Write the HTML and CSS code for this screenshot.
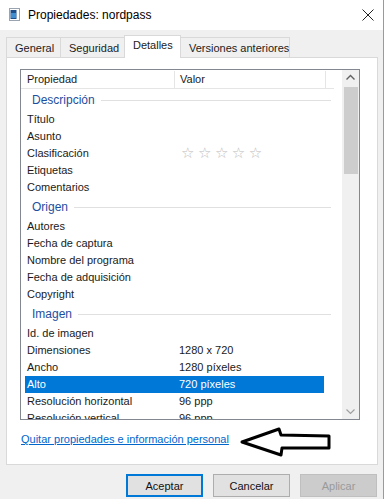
FILE: index.html
```html
<!DOCTYPE html>
<html lang="es">
<head>
<meta charset="utf-8">
<link rel="stylesheet" href="styles.css">
</head>
<body>
<div class="window">
  <div class="titlebar">
    <svg class="appicon" width="11" height="13" viewBox="0 0 11 13">
      <rect x="0.5" y="0.5" width="10" height="12" fill="#fff" stroke="#9aa4b0"/>
      <rect x="1.5" y="2" width="6" height="9" fill="#1d4e8a"/>
      <rect x="2" y="5" width="5" height="5" fill="#3f8fd0"/>
    </svg>
    <span class="title">Propiedades: nordpass</span>
    <svg class="close" width="12" height="12" viewBox="0 0 12 12">
      <path d="M0.5 0.5 L11.5 11.5 M11.5 0.5 L0.5 11.5" stroke="#222" stroke-width="1"/>
    </svg>
  </div>
  <div class="main">
    <div class="tabs">
      <div class="tab t-general">General</div>
      <div class="tab t-seg">Seguridad</div>
      <div class="tab active">Detalles</div>
      <div class="tab t-ver">Versiones anteriores</div>
    </div>
    <div class="panel">
      <div class="list">
        <div class="rows">
          <div class="header">
            <span class="hcol1">Propiedad</span>
            <span class="hcol2">Valor</span>
          </div>
          <div class="group"><span>Descripción</span><i></i></div>
          <div class="row"><span class="c1">Título</span><span class="c2"></span></div>
          <div class="row"><span class="c1">Asunto</span><span class="c2"></span></div>
          <div class="row"><span class="c1">Clasificación</span><span class="c2 stars">☆☆☆☆☆</span></div>
          <div class="row"><span class="c1">Etiquetas</span><span class="c2"></span></div>
          <div class="row"><span class="c1">Comentarios</span><span class="c2"></span></div>
          <div class="group"><span>Origen</span><i></i></div>
          <div class="row"><span class="c1">Autores</span><span class="c2"></span></div>
          <div class="row"><span class="c1">Fecha de captura</span><span class="c2"></span></div>
          <div class="row"><span class="c1">Nombre del programa</span><span class="c2"></span></div>
          <div class="row"><span class="c1">Fecha de adquisición</span><span class="c2"></span></div>
          <div class="row"><span class="c1">Copyright</span><span class="c2"></span></div>
          <div class="group"><span>Imagen</span><i></i></div>
          <div class="row"><span class="c1">Id. de imagen</span><span class="c2"></span></div>
          <div class="row"><span class="c1">Dimensiones</span><span class="c2">1280 x 720</span></div>
          <div class="row"><span class="c1">Ancho</span><span class="c2">1280 píxeles</span></div>
          <div class="row selected"><span class="c1">Alto</span><span class="c2">720 píxeles</span></div>
          <div class="row"><span class="c1">Resolución horizontal</span><span class="c2">96 ppp</span></div>
          <div class="row last"><span class="c1">Resolución vertical</span><span class="c2">96 ppp</span></div>
        </div>
        <div class="scrollbar">
          <svg class="arrow" width="17" height="16" viewBox="0 0 17 16"><path d="M4.5 9.5 L8.5 5.5 L12.5 9.5" fill="none" stroke="#606060" stroke-width="1.4"/></svg>
          <div class="track"><div class="thumb"></div></div>
          <svg class="arrow" width="17" height="16" viewBox="0 0 17 16"><path d="M4.5 6.5 L8.5 10.5 L12.5 6.5" fill="none" stroke="#a0a0a0" stroke-width="1.2"/></svg>
        </div>
      </div>
      <div class="linkline">
        <a class="link" href="#">Quitar propiedades e información personal</a>
        <svg class="bigarrow" width="96" height="32" viewBox="0 0 96 32">
          <polygon points="3,15 40,2 42,8 90,9 90,21 43,21 42,28" fill="#fff" stroke="#000" stroke-width="3" stroke-linejoin="round"/>
        </svg>
      </div>
    </div>
    <div class="buttons">
      <button class="btn default">Aceptar</button>
      <button class="btn">Cancelar</button>
      <button class="btn disabled">Aplicar</button>
    </div>
  </div>
</div>
</body>
</html>
```
FILE: styles.css
```css
html, body {
  margin: 0;
  padding: 0;
}
body {
  width: 384px;
  height: 499px;
  overflow: hidden;
  font-family: "Liberation Sans", Arial, sans-serif;
  font-size: 11px;
  color: #1a1a1a;
  background: #f0f0f0;
}
.window {
  display: flex;
  flex-direction: column;
  height: 499px;
  border-right: 1px solid #9a9a9a;
  box-sizing: border-box;
}
.titlebar {
  height: 30px;
  background: #fff;
  display: flex;
  align-items: center;
  padding-left: 9px;
  padding-right: 9px;
  flex-shrink: 0;
}
.appicon {
  margin-right: 8px;
  margin-top: -2px;
}
.title {
  font-size: 12px;
  color: #000;
  flex: 1;
  margin-top: -1px;
}
.close {
  margin-top: -1px;
}
.main {
  flex: 1;
  display: flex;
  flex-direction: column;
  background: #f0f0f0;
}
.tabs {
  display: flex;
  align-items: flex-end;
  height: 27px;
  padding-left: 6px;
}
.tab {
  height: 19px;
  line-height: 20px;
  border: 1px solid #d9d9d9;
  border-bottom: none;
  background: #f0f0f0;
  padding: 0 0 0 8px;
  margin-right: -1px;
  color: #222;
  white-space: nowrap;
  box-sizing: content-box;
}
.t-general { width: 45px; }
.t-seg { width: 55px; }
.t-ver { width: 100px; }
.tab.active {
  background: #fff;
  height: 22px;
  line-height: 19px;
  width: 47px;
  position: relative;
  z-index: 1;
  margin-bottom: -1px;
}
.panel {
  margin: 0 5px 0 6px;
  height: 408px;
  background: #fff;
  border: 1px solid #d9d9d9;
  padding: 11px 0 0 13px;
  box-sizing: border-box;
}
.list {
  width: 340px;
  height: 351px;
  border: 1px solid #828790;
  box-sizing: border-box;
  display: flex;
  overflow: hidden;
}
.rows {
  flex: 1;
  overflow: hidden;
}
.header {
  height: 19px;
  display: flex;
  align-items: center;
  border-bottom: 1px solid #e5e5e5;
  margin-right: 8px;
  box-sizing: border-box;
}
.hcol1 {
  width: 147px;
  padding-left: 6px;
  height: 17px;
  line-height: 17px;
  border-right: 1px solid #e5e5e5;
}
.hcol2 {
  width: 145px;
  padding-left: 5px;
  height: 17px;
  line-height: 17px;
  border-right: 1px solid #e5e5e5;
}
.group {
  height: 22px;
  display: flex;
  align-items: center;
  padding-left: 11px;
  margin-right: 11px;
  color: #1e4ea0;
  font-size: 12px;
}
.group i {
  flex: 1;
  height: 1px;
  background: #e0e0e0;
  margin-left: 6px;
}
.row {
  height: 17px;
  line-height: 17px;
  display: flex;
  margin-left: 4px;
  width: 299px;
  white-space: nowrap;
}
.row.last {
  line-height: 16px;
}
.c1 {
  width: 152px;
  padding-left: 2px;
}
.c2 {
  flex: 1;
}
.stars {
  color: #bdbdbd;
  font-family: "DejaVu Sans", sans-serif;
  font-size: 15px;
  letter-spacing: 3.5px;
  padding-left: 2px;
}
.row.selected {
  background: #0078d7;
  color: #fff;
}
.scrollbar {
  width: 17px;
  background: #f0f0f0;
  display: flex;
  flex-direction: column;
}
.arrow {
  display: block;
  flex-shrink: 0;
}
.track {
  flex: 1;
  padding: 1px 1px 0 2px;
}
.thumb {
  height: 87px;
  background: #cdcdcd;
}
.linkline {
  position: relative;
  margin-top: 13px;
  padding-left: 1px;
}
.link {
  color: #0066cc;
  text-decoration: underline;
}
.bigarrow {
  position: absolute;
  left: 219px;
  top: -6px;
}
.buttons {
  display: flex;
  justify-content: flex-end;
  gap: 10px;
  padding-right: 6px;
  margin-top: 9px;
}
.btn {
  width: 77px;
  height: 23px;
  font-family: "Liberation Sans", Arial, sans-serif;
  font-size: 11px;
  background: #e1e1e1;
  border: 1px solid #adadad;
  color: #111;
  padding: 0;
}
.btn.default {
  border: 2px solid #0078d7;
}
.btn.disabled {
  background: #cccccc;
  border-color: #bfbfbf;
  color: #9a9a9a;
}
```
